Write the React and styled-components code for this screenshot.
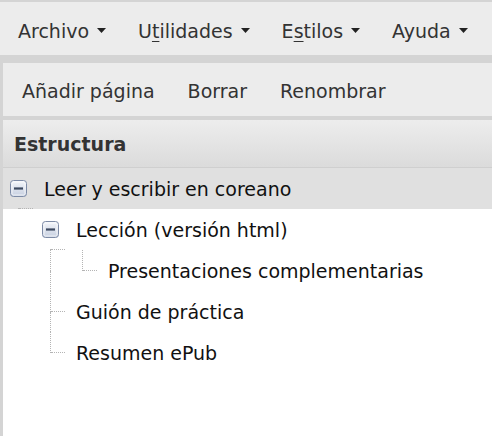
import React from "react";
import styled, { createGlobalStyle } from "styled-components";

const GlobalStyle = createGlobalStyle`
    html, body {
        margin: 0;
        padding: 0;
        background: #d4d4d4;
    }
    body {
        font-family: "DejaVu Sans", Verdana, sans-serif;
        width: 492px;
        height: 436px;
        overflow: hidden;
    }
`;

const menus = [
    { label: "Archivo" },
    { label: "Utilidades", key: 1 },
    { label: "Estilos", key: 1 },
    { label: "Ayuda" },
];

const tools = ["Añadir página", "Borrar", "Renombrar"];

// guides: one entry per ancestor column, true when a sibling line passes through it
const tree = [
    { label: "Leer y escribir en coreano", open: true, selected: true, up: true, guides: [] },
    { label: "Lección (versión html)", open: true, up: true, down: true, guides: [false] },
    { label: "Presentaciones complementarias", up: true, guides: [false, true] },
    { label: "Guión de práctica", up: true, down: true, guides: [false] },
    { label: "Resumen ePub", up: true, guides: [false] },
];

const Caret = () => (
    <svg width="9" height="5" viewBox="0 0 9 5">
        <path d="M0 0h9L4.5 5z" fill="#222" />
    </svg>
);

const MinusBox = () => (
    <svg width="17" height="17" viewBox="0 0 17 17">
        <defs>
            <linearGradient id="boxg" x1="0" y1="0" x2="0" y2="1">
                <stop offset="0" stopColor="#f4f6fa" />
                <stop offset="1" stopColor="#c6cfe0" />
            </linearGradient>
        </defs>
        <rect x="0.5" y="0.5" width="16" height="16" rx="3" fill="url(#boxg)" stroke="#7d8ba6" />
        <rect x="2" y="2" width="13" height="13" rx="1.5" fill="none" stroke="#ffffff" strokeOpacity="0.7" />
        <rect x="4" y="7.4" width="9" height="2.2" fill="#3d4a60" />
    </svg>
);

const TreeGuide = ({ up, down, right, children }) => (
    <Guide>
        <Quarter $side="right" $on={up} />
        <Quarter $side="bottom" $on={right} />
        <Quarter $side="right" $on={down} />
        <Quarter />
        {children && <IconSlot>{children}</IconSlot>}
    </Guide>
);

const App = () => {
    return (
        <Page>
            <GlobalStyle />
            <MenuBar>
                {menus.map((m) => (
                    <MenuItem key={m.label}>
                        {m.key ? (
                            <span>
                                {m.label[0]}
                                <u>{m.label[1]}</u>
                                {m.label.slice(2)}
                            </span>
                        ) : (
                            <span>{m.label}</span>
                        )}
                        <Caret />
                    </MenuItem>
                ))}
            </MenuBar>
            <ToolBar>
                {tools.map((t) => (
                    <ToolButton key={t}>{t}</ToolButton>
                ))}
            </ToolBar>
            <Panel>
                <PanelHeader>Estructura</PanelHeader>
                <Tree>
                    {tree.map((node) => (
                        <Row key={node.label} $selected={node.selected}>
                            {node.guides.map((g, i) => (
                                <TreeGuide key={i} up={g} down={g} />
                            ))}
                            <TreeGuide up={node.up} down={node.down} right>
                                {node.open && <MinusBox />}
                            </TreeGuide>
                            <Label>{node.label}</Label>
                        </Row>
                    ))}
                </Tree>
            </Panel>
        </Page>
    );
};

const Page = styled.div`
    display: flex;
    flex-direction: column;
    height: 436px;
`;

const MenuBar = styled.div`
    display: flex;
    align-items: center;
    height: 53px;
    margin-top: 2px;
    padding-left: 18px;
    gap: 32px;
    background: #ececec;
`;

const MenuItem = styled.div`
    display: flex;
    align-items: center;
    gap: 8px;
    font-size: 19px;
    color: #333;
    padding-top: 4px;

    u {
        text-decoration-thickness: 1px;
        text-underline-offset: 3px;
    }
`;

const ToolBar = styled.div`
    display: flex;
    align-items: center;
    height: 53px;
    margin-top: 8px;
    border-left: 3px solid #d4d4d4;
    padding-left: 19px;
    gap: 33px;
    background: #ececec;
`;

const ToolButton = styled.div`
    font-size: 19px;
    color: #333;
    padding-top: 3px;
`;

const Panel = styled.div`
    flex: 1;
    display: flex;
    flex-direction: column;
    margin-top: 4px;
    border-left: 3px solid #d4d4d4;
    background: #fff;
`;

const PanelHeader = styled.div`
    display: flex;
    align-items: center;
    height: 47px;
    padding-left: 11px;
    font-size: 19px;
    font-weight: bold;
    color: #333;
    background: linear-gradient(#ededed, #dbdbdb);
    border-bottom: 1px solid #cfcfcf;
`;

const Tree = styled.div`
    display: flex;
    flex-direction: column;
`;

const Row = styled.div`
    display: flex;
    align-items: stretch;
    height: 41px;
    background: ${(p) => (p.$selected ? "#e0e0e0" : "transparent")};
`;

const Guide = styled.div`
    display: grid;
    grid-template-columns: 16px 16px;
    grid-template-rows: 1fr 1fr;
    width: 32px;
    flex-shrink: 0;
`;

const Quarter = styled.div`
    border-${(p) => p.$side || "right"}: 1px dotted
        ${(p) => (p.$on ? "#b4b4b4" : "transparent")};
    margin-right: ${(p) => (p.$side === "bottom" ? "2px" : "0")};
`;

const IconSlot = styled.div`
    grid-area: 1 / 1 / 3 / 3;
    place-self: center;
    display: flex;
    margin-left: -1px;
    z-index: 1;
`;

const Label = styled.div`
    display: flex;
    align-items: center;
    padding-left: 9px;
    font-size: 19px;
    color: #111;
    white-space: nowrap;
`;

export default App;
